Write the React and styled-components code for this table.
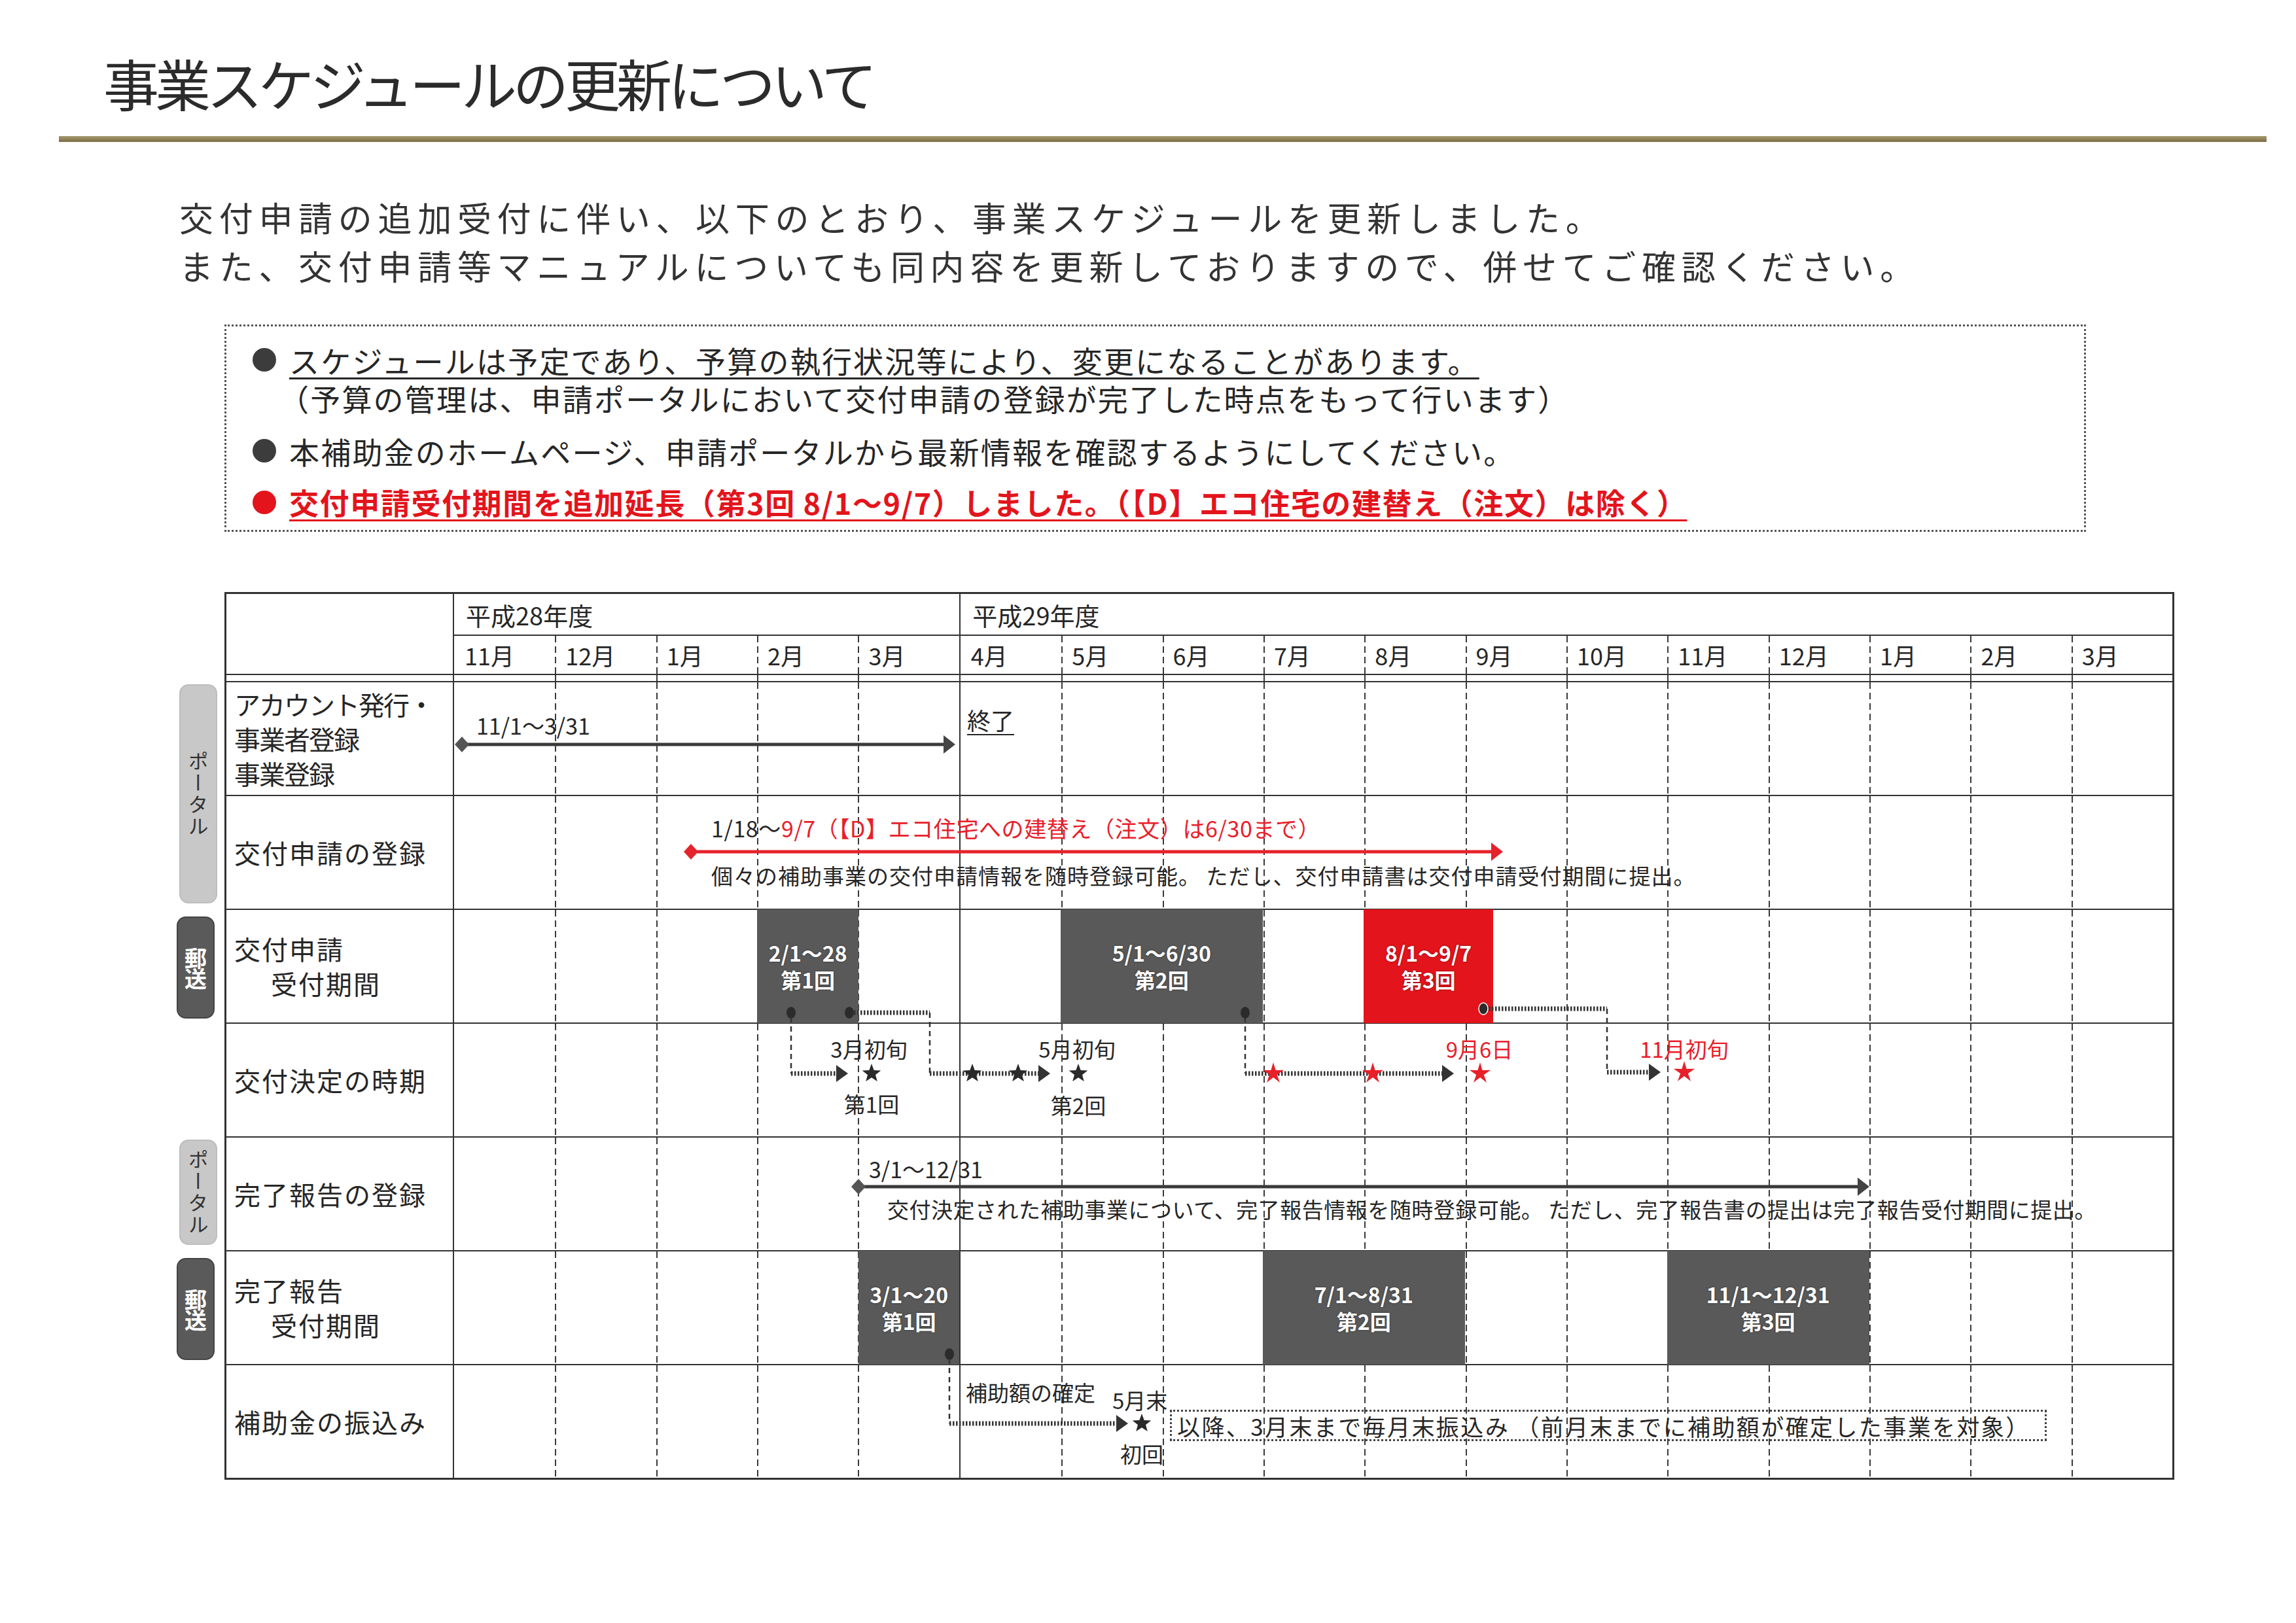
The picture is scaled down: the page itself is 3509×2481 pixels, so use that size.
import React from 'react';
import styled, { createGlobalStyle } from 'styled-components';

// chart geometry
const LABEL_W = 348;
const TIME_W = 2626;
const W = TIME_W / 17;
const ROW = 174;
const BODY_H = ROW * 7 - 2;

const RED = '#e3141c';
const INK = '#262626';

const GlobalStyle = createGlobalStyle`
  html, body {
    margin: 0;
    padding: 0;
    background: #fff;
  }
  body {
    width: 3509px;
    height: 2481px;
    overflow: hidden;
    font-family: "Noto Sans CJK JP", "Noto Sans", sans-serif;
    color: ${INK};
  }
`;

const Page = styled.div`
  width: 3509px;
  height: 2481px;
  box-sizing: border-box;
  padding-top: 84px;
`;

const Title = styled.h1`
  margin: 0 0 0 158px;
  font-size: 85px;
  font-weight: 400;
  line-height: 84px;
  letter-spacing: -6px;
  color: #2b2b2b;
`;

const Rule = styled.div`
  margin: 40px 45px 0 90px;
  height: 9px;
  background: linear-gradient(#a89b70, #7a6c44);
`;

const Intro = styled.div`
  margin: 78px 0 0 274px;
  font-size: 52px;
  line-height: 74px;
  letter-spacing: 8.7px;
  color: #333;
`;

const NoticeBox = styled.div`
  margin: 53px 0 0 343px;
  width: 2845px;
  height: 317px;
  box-sizing: border-box;
  border: 3px dotted #555;
  padding: 22px 0 0 40px;
`;

const NoticeLine = styled.div`
  display: flex;
  align-items: center;
  height: 58px;
  margin-top: ${(p) => p.$gap || 0}px;
  font-size: ${(p) => (p.$red ? 45 : 46)}px;
  letter-spacing: ${(p) => (p.$red ? 1.6 : 2.2)}px;
  font-weight: ${(p) => (p.$red ? 700 : 400)};
  color: ${(p) => (p.$red ? RED : INK)};
  padding-left: ${(p) => (p.$sub ? 40 : 0)}px;
`;

const NoticeText = styled.span`
  display: inline-block;
  line-height: 50px;
  white-space: nowrap;
  text-decoration: ${(p) => (p.$underline ? 'underline' : 'none')};
  text-decoration-thickness: 3px;
  text-underline-offset: 7px;
`;

const Bullet = styled.span`
  flex: none;
  width: 36px;
  height: 36px;
  border-radius: 50%;
  margin-right: 20px;
  background: ${(p) => (p.$red ? RED : '#3c3c3c')};
`;

const ChartWrap = styled.div`
  display: flex;
  margin-top: 92px;
  padding-left: 270px;
`;

const SideCol = styled.div`
  width: 73px;
  flex: none;
  padding-top: 138px;
  display: grid;
  grid-template-rows: repeat(7, ${ROW}px);
`;

const Tag = styled.div`
  grid-row: ${(p) => p.$row} / span ${(p) => p.$span || 1};
  width: 58px;
  margin: ${(p) => (p.$dark ? '10px 0 8px 0' : '3px 0 10px 4px')};
  border-radius: 14px;
  background: ${(p) => (p.$dark ? '#5a5a5a' : '#c8c8c8')};
  border: 2px solid ${(p) => (p.$dark ? '#444' : '#bdbdbd')};
  box-sizing: border-box;
  display: flex;
  align-items: center;
  justify-content: center;
  writing-mode: vertical-rl;
  text-orientation: upright;
  font-size: ${(p) => (p.$dark ? 34 : 31)}px;
  font-weight: ${(p) => (p.$dark ? 700 : 400)};
  letter-spacing: ${(p) => (p.$dark ? -3 : 2)}px;
  color: ${(p) => (p.$dark ? '#fff' : '#333')};
`;

const Table = styled.div`
  width: ${LABEL_W + TIME_W + 6}px;
  flex: none;
  box-sizing: border-box;
  border: 3px solid #333;
  background: #fff;
`;

const HeadBand = styled.div`
  display: flex;
  border-bottom: 2px solid #333;
`;

const LabelCell = styled.div`
  width: ${LABEL_W}px;
  flex: none;
  box-sizing: border-box;
  border-right: 2px solid #333;
`;

const HeadTimeline = styled.div`
  flex: 1;
  display: flex;
  flex-direction: column;
`;

const YearRow = styled.div`
  display: flex;
  height: 64px;
  box-sizing: border-box;
  border-bottom: 2px solid #333;
`;

const YearCell = styled.div`
  width: ${(p) => p.$span * W}px;
  box-sizing: border-box;
  border-left: ${(p) => (p.$first ? 'none' : '2px solid #333')};
  padding-left: 18px;
  display: flex;
  align-items: center;
  font-size: 38px;
`;

const edgeCss = ({ $edge }) => {
  if ($edge === 'solid') return 'border-left: 2px solid #333;';
  if ($edge === 'dashed')
    return 'background: linear-gradient(#3a3a3a 62%, transparent 0) 0 0 / 2px 16px repeat-y;';
  return '';
};

const MonthRow = styled.div`
  display: flex;
  height: 58px;
`;

const MonthCell = styled.div`
  flex: 1;
  box-sizing: border-box;
  padding-left: 16px;
  display: flex;
  align-items: center;
  font-size: 36px;
  ${edgeCss}
`;

const Spacer = styled.div`
  display: flex;
  height: 11px;
  box-sizing: border-box;
  border-bottom: 2px solid #333;
`;

const GridCell = styled.div`
  flex: 1;
  box-sizing: border-box;
  ${edgeCss}
`;

const Timeline = styled.div`
  flex: 1;
  display: flex;
`;

const Body = styled.div`
  position: relative;
`;

const BodyRow = styled.div`
  display: flex;
  height: ${ROW}px;
  box-sizing: border-box;
  border-bottom: 2px solid #333;

  &:last-child {
    border-bottom: none;
    height: ${ROW - 2}px;
  }
`;

const RowLabel = styled(LabelCell)`
  display: flex;
  flex-direction: column;
  justify-content: center;
  padding-left: 12px;
  font-size: 40px;
  line-height: 53px;
  letter-spacing: ${(p) => (p.$tight ? -2 : 2)}px;
`;

const Indent = styled.span`
  padding-left: 56px;
`;

const Overlay = styled.div`
  position: absolute;
  left: ${LABEL_W}px;
  top: 0;
  width: ${TIME_W}px;
  height: ${BODY_H}px;
  pointer-events: none;
`;

const Bar = styled.div`
  position: absolute;
  left: ${(p) => p.$from * W}px;
  width: ${(p) => (p.$to - p.$from) * W}px;
  top: ${(p) => p.$row * ROW - 1}px;
  height: ${ROW}px;
  background: ${(p) => (p.$red ? RED : '#595959')};
  color: #fff;
  font-weight: 700;
  font-size: 32px;
  line-height: 41px;
  display: flex;
  flex-direction: column;
  align-items: center;
  justify-content: center;
  text-shadow: 0 0 3px rgba(0, 0, 0, 0.45);
`;

const Drawing = styled.svg`
  position: absolute;
  left: 0;
  top: 0;
  overflow: visible;
`;

const Note = styled.span`
  position: absolute;
  left: ${(p) => p.$x}px;
  top: ${(p) => p.$y}px;
  transform: translate(${(p) => (p.$center ? '-50%' : '0')}, -50%);
  font-size: ${(p) => p.$size || 33}px;
  letter-spacing: ${(p) => p.$track || 0}px;
  line-height: 1;
  color: ${(p) => (p.$red ? '#e8202a' : INK)};
  white-space: nowrap;
  text-decoration: ${(p) => (p.$underline ? 'underline' : 'none')};
  text-decoration-thickness: 2px;
  text-underline-offset: 6px;
`;

const RedText = styled.span`
  color: #e8202a;
`;

const DottedBox = styled.div`
  position: absolute;
  left: 1094px;
  top: 1112px;
  width: 1340px;
  height: 48px;
  box-sizing: border-box;
  border: 3px dotted #444;
  padding-left: 8px;
  display: flex;
  align-items: center;
  font-size: 35px;
  letter-spacing: 2.4px;
  white-space: nowrap;
`;

const months = ['11月', '12月', '1月', '2月', '3月', '4月', '5月', '6月', '7月', '8月', '9月', '10月', '11月', '12月', '1月', '2月', '3月'];
const edgeOf = (i) => (i === 0 ? 'none' : i === 5 ? 'solid' : 'dashed');

const rows = [
  { lines: ['アカウント発行・', '事業者登録', '事業登録'], tight: true },
  { lines: ['交付申請の登録'] },
  { lines: ['交付申請'], indent: '受付期間' },
  { lines: ['交付決定の時期'] },
  { lines: ['完了報告の登録'] },
  { lines: ['完了報告'], indent: '受付期間' },
  { lines: ['補助金の振込み'] },
];

const bars = [
  { row: 2, from: 3, to: 4, lines: ['2/1〜28', '第1回'] },
  { row: 2, from: 6, to: 8, lines: ['5/1〜6/30', '第2回'] },
  { row: 2, from: 9, to: 10.28, lines: ['8/1〜9/7', '第3回'], red: true },
  { row: 5, from: 4, to: 5, lines: ['3/1〜20', '第1回'] },
  { row: 5, from: 8, to: 10, lines: ['7/1〜8/31', '第2回'] },
  { row: 5, from: 12, to: 14, lines: ['11/1〜12/31', '第3回'] },
];

const starPoints = (cx, cy, R, k = 0.4) => {
  const pts = [];
  for (let i = 0; i < 10; i++) {
    const rad = i % 2 ? R * k : R;
    const a = -Math.PI / 2 + (i * Math.PI) / 5;
    pts.push(`${(cx + rad * Math.cos(a)).toFixed(1)},${(cy + rad * Math.sin(a)).toFixed(1)}`);
  }
  return pts.join(' ');
};

const Star = ({ x, y, red }) => (
  <polygon points={starPoints(x, y, red ? 17 : 15, red ? 0.36 : 0.42)} fill={red ? '#e8202a' : '#2a2a2a'} />
);

const Diamond = ({ x, y, color }) => (
  <polygon points={`${x - 11},${y} ${x},${y - 12} ${x + 11},${y} ${x},${y + 12}`} fill={color} />
);

const Tip = ({ x, y, color, len = 20, half = 13 }) => (
  <polygon points={`${x - len},${y - half} ${x},${y} ${x - len},${y + half}`} fill={color} />
);

const Dot = ({ x, y }) => <ellipse cx={x} cy={y} rx={7} ry={9} fill="#2b2b2b" />;

const Dotted = ({ x1, x2, y }) => (
  <line x1={x1} y1={y} x2={x2} y2={y} stroke="#333" strokeWidth={7} strokeDasharray="2.5 2.5" />
);

const Dashed = ({ x, y1, y2 }) => (
  <line x1={x} y1={y1} x2={x} y2={y2} stroke="#333" strokeWidth={2.5} strokeDasharray="8 6" />
);

const Connectors = () => (
  <Drawing width={TIME_W} height={BODY_H} viewBox={`0 0 ${TIME_W} ${BODY_H}`}>
    {/* account registration */}
    <line x1={12} y1={95} x2={752} y2={95} stroke="#3a3a3a" strokeWidth={5} />
    <Diamond x={12} y={95} color="#555" />
    <Tip x={766} y={95} color="#444" len={18} half={14} />

    {/* application registration */}
    <line x1={362} y1={259} x2={1590} y2={259} stroke="#e5232b" strokeWidth={5} />
    <Diamond x={362} y={259} color="#e5232b" />
    <Tip x={1603} y={259} color="#e5232b" len={18} half={14} />

    {/* round 1 */}
    <Dot x={515} y={505} />
    <Dashed x={515} y1={512} y2={598} />
    <Dotted x1={515} x2={586} y={598} />
    <Tip x={602} y={598} color="#333" len={18} half={13} />
    <Star x={638} y={598} />

    {/* round 2 */}
    <Dot x={604} y={505} />
    <Dotted x1={611} x2={727} y={505} />
    <Dashed x={727} y1={505} y2={598} />
    <Dotted x1={727} x2={895} y={598} />
    <Star x={792} y={598} />
    <Star x={862} y={598} />
    <Tip x={911} y={598} color="#333" len={18} half={13} />
    <Star x={954} y={598} />

    {/* round 2 to 9/6 */}
    <Dot x={1209} y={505} />
    <Dashed x={1209} y1={512} y2={598} />
    <Dotted x1={1209} x2={1512} y={598} />
    <Star x={1252} y={598} red />
    <Star x={1404} y={598} red />
    <Tip x={1528} y={598} color="#333" len={18} half={13} />
    <Star x={1568} y={598} red />

    {/* round 3 */}
    <ellipse cx={1573} cy={499} rx={7} ry={9} fill="#2b2b2b" stroke="#fff" strokeWidth={1.5} />
    <Dotted x1={1581} x2={1762} y={499} />
    <Dashed x={1762} y1={499} y2={596} />
    <Dotted x1={1762} x2={1828} y={596} />
    <Tip x={1844} y={596} color="#333" len={18} half={13} />
    <Star x={1880} y={596} red />

    {/* completion report registration */}
    <line x1={618} y1={771} x2={2150} y2={771} stroke="#3a3a3a" strokeWidth={5} />
    <Diamond x={618} y={771} color="#555" />
    <Tip x={2163} y={771} color="#444" len={18} half={14} />

    {/* first payment */}
    <Dot x={757} y={1027} />
    <Dashed x={757} y1={1034} y2={1133} />
    <Dotted x1={757} x2={1014} y={1133} />
    <Tip x={1030} y={1133} color="#333" len={18} half={13} />
    <Star x={1051} y={1133} />
  </Drawing>
);

const App = () => (
  <Page>
    <GlobalStyle />
    <Title>事業スケジュールの更新について</Title>
    <Rule />

    <Intro>
      <div>交付申請の追加受付に伴い、以下のとおり、事業スケジュールを更新しました。</div>
      <div>また、交付申請等マニュアルについても同内容を更新しておりますので、併せてご確認ください。</div>
    </Intro>

    <NoticeBox>
      <NoticeLine>
        <Bullet />
        <NoticeText $underline>スケジュールは予定であり、予算の執行状況等により、変更になることがあります。</NoticeText>
      </NoticeLine>
      <NoticeLine $sub>
        <NoticeText>（予算の管理は、申請ポータルにおいて交付申請の登録が完了した時点をもって行います）</NoticeText>
      </NoticeLine>
      <NoticeLine $gap={23}>
        <Bullet />
        <NoticeText>本補助金のホームページ、申請ポータルから最新情報を確認するようにしてください。</NoticeText>
      </NoticeLine>
      <NoticeLine $gap={21} $red>
        <Bullet $red />
        <NoticeText $underline>交付申請受付期間を追加延長（第3回 8/1〜9/7）しました。（【D】エコ住宅の建替え（注文）は除く）</NoticeText>
      </NoticeLine>
    </NoticeBox>

    <ChartWrap>
      <SideCol>
        <Tag $row={1} $span={2}>ポータル</Tag>
        <Tag $row={3} $dark>郵送</Tag>
        <Tag $row={5}>ポータル</Tag>
        <Tag $row={6} $dark>郵送</Tag>
      </SideCol>

      <Table>
        <HeadBand>
          <LabelCell />
          <HeadTimeline>
            <YearRow>
              <YearCell $span={5} $first>平成28年度</YearCell>
              <YearCell $span={12}>平成29年度</YearCell>
            </YearRow>
            <MonthRow>
              {months.map((m, i) => (
                <MonthCell key={i} $edge={edgeOf(i)}>{m}</MonthCell>
              ))}
            </MonthRow>
          </HeadTimeline>
        </HeadBand>
        <Spacer>
          <LabelCell />
          <Timeline>
            {months.map((m, i) => (
              <GridCell key={i} $edge={edgeOf(i)} />
            ))}
          </Timeline>
        </Spacer>

        <Body>
          <div>
            {rows.map((r, ri) => (
              <BodyRow key={ri}>
                <RowLabel $tight={r.tight}>
                  {r.lines.map((l) => (
                    <span key={l}>{l}</span>
                  ))}
                  {r.indent && <Indent>{r.indent}</Indent>}
                </RowLabel>
                <Timeline>
                  {months.map((m, i) => (
                    <GridCell key={i} $edge={edgeOf(i)} />
                  ))}
                </Timeline>
              </BodyRow>
            ))}
          </div>

          <Overlay>
            {bars.map((b, i) => (
              <Bar key={i} $row={b.row} $from={b.from} $to={b.to} $red={b.red}>
                {b.lines.map((l) => (
                  <span key={l}>{l}</span>
                ))}
              </Bar>
            ))}

            <Connectors />

            <Note $x={34} $y={66} $size={34}>11/1〜3/31</Note>
            <Note $x={784} $y={57} $size={36} $underline>終了</Note>

            <Note $x={393} $y={223} $size={34} $track={0.6}>
              1/18〜<RedText>9/7（【D】エコ住宅への建替え（注文）は6/30まで）</RedText>
            </Note>
            <Note $x={393} $y={295} $size={33} $track={1}>
              個々の補助事業の交付申請情報を随時登録可能。 ただし、交付申請書は交付申請受付期間に提出。
            </Note>

            <Note $x={634} $y={560} $size={33} $center>3月初旬</Note>
            <Note $x={638} $y={644} $size={33} $center>第1回</Note>
            <Note $x={952} $y={560} $size={33} $center>5月初旬</Note>
            <Note $x={954} $y={646} $size={33} $center>第2回</Note>
            <Note $x={1567} $y={560} $size={33} $center $red>9月6日</Note>
            <Note $x={1880} $y={560} $size={33} $center $red>11月初旬</Note>

            <Note $x={634} $y={744} $size={34}>3/1〜12/31</Note>
            <Note $x={662} $y={805} $size={33} $track={0.5}>
              交付決定された補助事業について、完了報告情報を随時登録可能。 ただし、完了報告書の提出は完了報告受付期間に提出。
            </Note>

            <Note $x={782} $y={1085} $size={33}>補助額の確定</Note>
            <Note $x={1006} $y={1097} $size={33}>5月末</Note>
            <Note $x={1051} $y={1179} $size={33} $center>初回</Note>
            <DottedBox>以降、3月末まで毎月末振込み （前月末までに補助額が確定した事業を対象）</DottedBox>
          </Overlay>
        </Body>
      </Table>
    </ChartWrap>
  </Page>
);

export default App;
